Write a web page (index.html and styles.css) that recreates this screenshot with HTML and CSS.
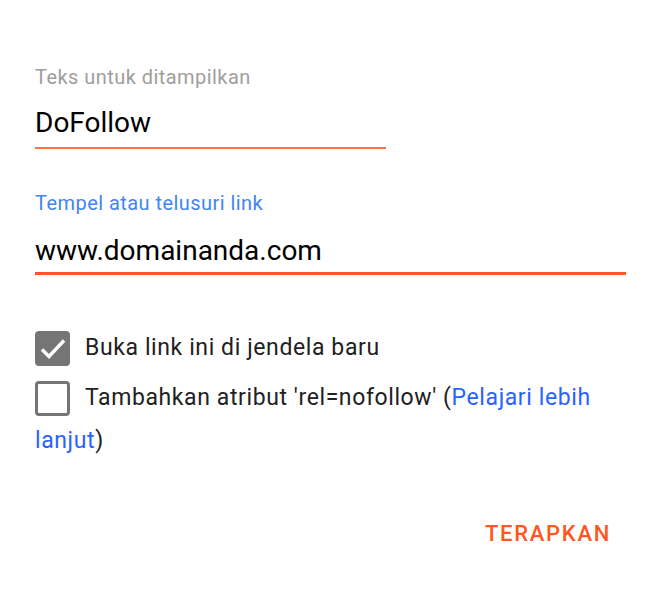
FILE: index.html
```html
<!DOCTYPE html>
<html lang="id">
<head>
<meta charset="utf-8">
<title>Link</title>
<link rel="stylesheet" href="styles.css">
</head>
<body>
<div class="dialog">
  <div class="field field-short">
    <div class="label label-idle">Teks untuk ditampilkan</div>
    <div class="value">DoFollow</div>
    <div class="line line-thin"></div>
  </div>
  <div class="field field-long">
    <div class="label label-focus">Tempel atau telusuri link</div>
    <div class="value">www.domainanda.com</div>
    <div class="line line-thick"></div>
  </div>
  <div class="options">
    <div class="option"><span class="box box-checked"><svg class="check" viewBox="0 0 35 35" width="35" height="35"><path d="M7 18.5l7 7 15-16" fill="none" stroke="#fff" stroke-width="3.4"/></svg></span>Buka link ini di jendela baru</div>
    <div class="option option-wrap"><span class="box box-empty"></span>Tambahkan atribut 'rel=nofollow' (<a class="link">Pelajari lebih lanjut</a>)</div>
  </div>
  <div class="actions">
    <span class="apply">TERAPKAN</span>
  </div>
</div>
</body>
</html>
```
FILE: styles.css
```css
html, body {
  margin: 0;
  padding: 0;
  background: #ffffff;
}
body {
  font-family: Roboto, "Liberation Sans", sans-serif;
  color: #212121;
}
.dialog {
  padding: 66px 38px 0 35px;
}
.field {
  display: flex;
  flex-direction: column;
}
.field-short {
  width: 351px;
}
.label {
  font-size: 20px;
  line-height: 22px;
  letter-spacing: 0.45px;
}
.label-idle { color: #9e9e9e; }
.label-focus { color: #4285f4; }
.value {
  font-size: 28px;
  line-height: 32px;
  color: #000;
}
.field-short .value { margin-top: 19px; }
.field-long .value { margin-top: 21px; }
.line-thin {
  height: 2px;
  background: #ff7043;
  margin-top: 8px;
}
.line-thick {
  height: 3px;
  background: #ff5722;
  margin-top: 5px;
}
.field-long {
  margin-top: 43px;
}
.options {
  margin-top: 51px;
  font-size: 23px;
  letter-spacing: 0.6px;
  color: #212121;
}
.option {
  line-height: 43px;
}
.option + .option {
  margin-top: 7px;
}
.box {
  display: inline-block;
  box-sizing: border-box;
  width: 35px;
  height: 35px;
  border-radius: 4px;
  vertical-align: -11px;
  margin-right: 15px;
}
.box-checked {
  background: #757575;
}
.check {
  display: block;
}
.box-empty {
  border: 3px solid #757575;
}
.link {
  color: #2962ff;
}
.actions {
  display: flex;
  justify-content: flex-end;
  margin-top: 59px;
  padding-right: 15px;
}
.apply {
  font-size: 22px;
  line-height: 26px;
  font-weight: 500;
  letter-spacing: 1.7px;
  color: #ff5722;
}
```
